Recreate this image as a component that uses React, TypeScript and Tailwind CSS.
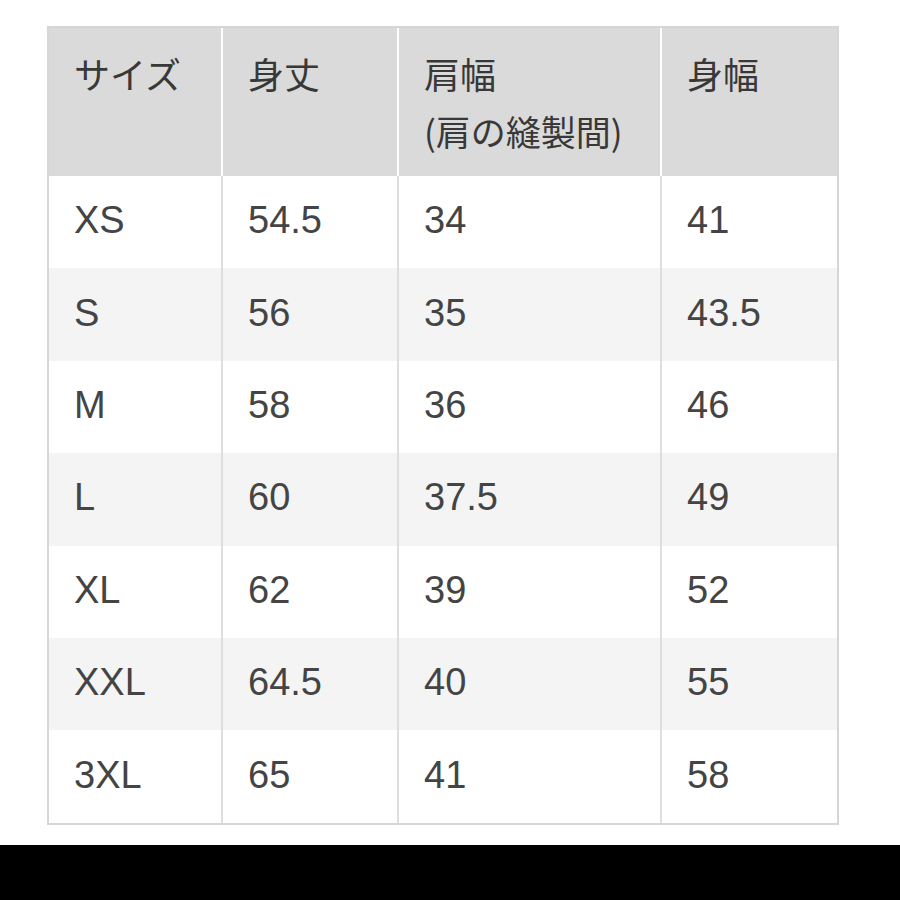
const HEADERS = [["サイズ"], ["身丈"], ["肩幅", "(肩の縫製間)"], ["身幅"]];

const ROWS = [
  ["XS", "54.5", "34", "41"],
  ["S", "56", "35", "43.5"],
  ["M", "58", "36", "46"],
  ["L", "60", "37.5", "49"],
  ["XL", "62", "39", "52"],
  ["XXL", "64.5", "40", "55"],
  ["3XL", "65", "41", "58"],
];

const COL_WIDTHS = ["w-[174px]", "w-[176px]", "w-[263px]", "w-[175px]"];

export default function App() {
  return (
    <div
      className="h-[900px] w-[900px] bg-white flex flex-col overflow-hidden"
      style={{ fontFamily: '"Liberation Sans", Arial, "Noto Sans CJK JP", sans-serif' }}
    >
      <div className="ml-[47px] mt-[26px] w-[792px] border-2 border-[#d6d6d6] text-[38px] leading-[57px] text-[#444]">
        {/* Header */}
        <div className="flex h-[148px] bg-[#dadada]">
          {HEADERS.map((lines, i) => (
            <div
              key={i}
              className={`${COL_WIDTHS[i]} shrink-0 pl-[25px] pt-[17px] ${i < 3 ? "border-r-2 border-white" : ""}`}
            >
              {lines.map((l) => (
                <div key={l} className="text-[#383838]" style={{ fontFamily: '"Noto Sans CJK JP", sans-serif', fontSize: i === 2 && l.startsWith("(") ? 35 : 36 }}>
                  {l}
                </div>
              ))}
            </div>
          ))}
        </div>

        {/* Body */}
        {ROWS.map((row, r) => (
          <div key={row[0]} className={`flex h-[92.4px] ${r % 2 === 1 ? "bg-[#f4f4f4]" : "bg-white"}`}>
            {row.map((cell, i) => (
              <div
                key={i}
                className={`${COL_WIDTHS[i]} shrink-0 pl-[25px] pb-[3px] flex items-center ${i < 3 ? "border-r-2 border-[#dedede]" : ""}`}
              >
                {cell}
              </div>
            ))}
          </div>
        ))}
      </div>
      <div className="flex-1" />
      <div className="h-[55px] bg-black" />
    </div>
  );
}
